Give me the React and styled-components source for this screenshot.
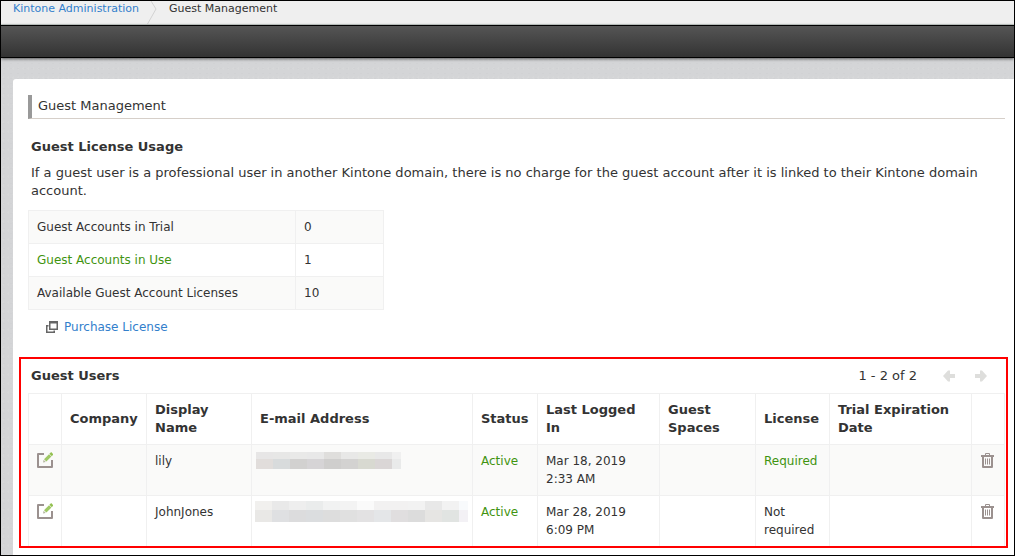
import styled, { createGlobalStyle } from 'styled-components'

const GlobalStyle = createGlobalStyle`
  * {
    box-sizing: border-box;
  }
  body {
    margin: 0;
    color: #333;
    background: #fff;
    font-family: 'DejaVu Sans', Verdana, sans-serif;
    font-size: 12px;
    line-height: 18px;
  }
`

const Page = styled.div`
  display: flex;
  flex-direction: column;
  min-height: 100vh;
  border: 1px solid #000;
  background-color: #d4d5d7;
  background-image: radial-gradient(#d1d2d4 1px, transparent 1px), radial-gradient(#d7d8d9 1px, transparent 1px);
  background-size: 7px 5px, 5px 9px;
`

const Breadcrumb = styled.nav`
  display: flex;
  height: 24px;
  padding-left: 12px;
  background: #efefef;
  border-bottom: 1px solid #c9d0cc;
  font-size: 11px;
  line-height: 16px;
`

const Separator = styled.svg`
  width: 10px;
  height: 23px;
  margin: 0 12px 0 8px;
`

const Toolbar = styled.div`
  height: 33px;
  border-top: 1px solid #000;
  border-bottom: 1px solid #000;
  background: linear-gradient(#555, #333);
  box-shadow: 0 1px 3px rgba(0, 0, 0, 0.6);
`

const Link = styled.a`
  color: #3380cc;
  text-decoration: none;
`

const Panel = styled.main`
  flex: 1;
  margin: 21px 0 0 12px;
  padding: 16px 6px 7px;
  background: #fff;
  border-top-left-radius: 3px;
`

const Content = styled.div`
  padding: 0 3px 0 9px;
`

const PageTitle = styled.h1`
  margin: 0;
  height: 24px;
  padding-left: 6px;
  border-left: 4px solid #999;
  border-bottom: 1px solid #d6cfc9;
  font-size: 13px;
  font-weight: 400;
  line-height: 21px;
`

const SectionTitle = styled.h2`
  margin: 0;
  padding-left: 3px;
  font-size: 13px;
  line-height: 34px;
`

const Usage = styled.section`
  padding-top: 11px;
`

const Description = styled.p`
  margin: 0 0 10px;
  padding: 0 3px;
  font-size: 13px;
  line-height: 18px;
`

const Table = styled.table`
  width: ${({ $width }) => $width || '100%'};
  table-layout: fixed;
  border-collapse: collapse;

  tr:nth-child(odd) > td {
    background: #fafaf9;
  }
`

const Col = styled.col`
  width: ${({ $width }) => $width};
`

const Cell = styled.td`
  padding: 7px 8px;
  border: 1px solid #f0f0f0;
  color: ${({ $active }) => ($active ? '#3f9410' : '#333')};
  vertical-align: top;
`

const HeadCell = styled.th`
  padding: 7px 8px;
  border: 1px solid #f0f0f0;
  font-size: 13px;
  text-align: left;
`

const MailCell = styled(Cell)`
  padding: 5px 3px;
`

const Purchase = styled.div`
  display: flex;
  align-items: center;
  gap: 6px;
  padding: 8px 0 0 18px;
`

const GuestUsers = styled.section`
  margin-top: 21px;
  padding: 0 1px 0 7px;
  border: 2px solid #f00;

  /* the frame closes the table, so the last row has no line of its own */
  tbody tr:last-child td {
    border-bottom: 0;
  }
`

const ListHeader = styled.div`
  display: flex;
  align-items: center;
  justify-content: space-between;
`

const Pager = styled.div`
  display: flex;
  align-items: center;
  padding-right: 18px;
  font-size: 13px;
`

const PagerButtons = styled.div`
  display: flex;
  gap: 20px;
  margin-left: 26px;
`

const IconButton = styled.button`
  display: block;
  padding: 0;
  border: 0;
  background: none;
  cursor: pointer;

  svg {
    display: block;
  }
`

const Mosaic = styled.svg`
  display: block;
`

const EditIcon = () => (
  <svg width="16" height="18" viewBox="0 0 16 18" fill="none">
    <path d="M7 2H1V15H15V8" stroke="#9b918f" strokeWidth="2" strokeLinejoin="round" />
    <path d="M7 7.2L12 2.2L14.4 4.6L9.4 9.6Z" fill="#9fc865" />
    <path d="M12.4 1.8L14.2 0L16.4 2.4L14.8 4.2Z" fill="#93c050" />
    <path d="M6 10.6L6.6 7.8L8.8 10Z" fill="#b5b8a2" />
  </svg>
)

const TrashIcon = () => (
  <svg width="14" height="18" viewBox="-1 0 14 18" fill="none" stroke="#9b918f">
    <path d="M4.5 3V1.5H8.5V3" />
    <path d="M0 4H13" strokeWidth="2" />
    <path d="M2 5V15H11V5" strokeWidth="2" strokeLinejoin="round" />
    <path d="M4.5 6.5V12.5M6.5 6.5V12.5M8.5 6.5V12.5" />
  </svg>
)

const ArrowIcon = ({ right }) => (
  <svg width="12" height="12" viewBox="0 0 12 12" fill="#dededc">
    {right ? (
      <path d="M12 6L7 0.5H5V4H0V8H5V11.5H7Z" />
    ) : (
      <path d="M0 6L5 0.5H7V4H12V8H7V11.5H5Z" />
    )}
  </svg>
)

const WindowIcon = () => (
  <svg width="12" height="12" viewBox="0 0 12 12" fill="#666">
    <path fillRule="evenodd" d="M3 0H12V9H3ZM4.5 2.5V7.5H10.5V2.5Z" />
    <path d="M0 4H2.5V5.5H1.5V10.5H7.5V9.5H9V12H0Z" />
  </svg>
)

const guests = [
  {
    name: 'lily',
    mail: {
      x: 1,
      y: 2,
      heights: [7, 10],
      colors: [
        ['#e7e6e6', '#e7e7e6', '#e9e9e8', '#e8e8e8', '#dfdedc', '#e8e8e7', '#e9eae5', '#e8e8e8', '#f0f0f0'],
        ['#e1dddb', '#d8dbdc', '#d2d1d0', '#d6d4d6', '#cfcecd', '#d3d2d1', '#d8d9d1', '#dad6d6', '#e9eaea']
      ]
    },
    seen: ['Mar 18, 2019', '2:33 AM'],
    license: 'Required',
    required: true
  },
  {
    name: 'JohnJones',
    mail: {
      x: 0,
      y: 0,
      heights: [9, 12],
      colors: [
        ['#f1f0ee', '#e9e9e9', '#eeeeee', '#eaecec', '#f1f2f2', '#f3f3f3', '#fafafa', '#f2f1f1', '#f2f1f1', '#f2f2f2', '#e8e8e8', '#f2f2f2', '#f8fafc'],
        ['#e9e8e6', '#dfe0e2', '#dcdcdd', '#dbdddf', '#dddddd', '#e0e0e0', '#e3e2e3', '#e4e6e8', '#e0dedf', '#dcdcdc', '#e6e5e3', '#e1e4e2', '#f3f1f5']
      ]
    },
    seen: ['Mar 28, 2019', '6:09 PM'],
    license: 'Not required',
    required: false
  }
]

const MaskedMail = ({ mail }) => (
  <Mosaic width="214" height="24" role="img" aria-label="Hidden address" shapeRendering="crispEdges">
    {mail.colors.map((row, i) =>
      row.map((color, j) => (
        <rect
          key={`${i}-${j}`}
          x={mail.x + j * 17}
          y={mail.y + (i === 0 ? 0 : mail.heights[0])}
          width={j === row.length - 1 ? 9 : 17}
          height={mail.heights[i]}
          fill={color}
        />
      ))
    )}
  </Mosaic>
)

const usage = [
  { label: 'Guest Accounts in Trial', value: 0 },
  { label: 'Guest Accounts in Use', value: 1, active: true },
  { label: 'Available Guest Account Licenses', value: 10 }
]

const columns = [
  { label: '', width: '33px' },
  { label: 'Company', width: '85px' },
  { label: 'Display Name', width: '105px' },
  { label: 'E-mail Address', width: 'auto' },
  { label: 'Status', width: '65px' },
  { label: 'Last Logged In', width: '122px' },
  { label: 'Guest Spaces', width: '96px' },
  { label: 'License', width: '74px' },
  { label: 'Trial Expiration Date', width: '142px' },
  { label: '', width: '33px' }
]

const App = () => {
  return (
    <>
      <GlobalStyle />
      <Page>
        <Breadcrumb aria-label="Breadcrumb">
          <Link href="#admin">Kintone Administration</Link>
          <Separator viewBox="0 0 10 23" fill="none" stroke="#d2d2d2" aria-hidden="true">
            <path d="M4 0L9 8L0.5 23" />
          </Separator>
          <span>Guest Management</span>
        </Breadcrumb>
        <Toolbar />

        <Panel>
          <Content>
            <PageTitle>Guest Management</PageTitle>

            <Usage>
              <SectionTitle>Guest License Usage</SectionTitle>
              <Description>
                If a guest user is a professional user in another Kintone domain, there is no charge for the guest
                account after it is linked to their Kintone domain account.
              </Description>
              <Table $width="356px">
                <colgroup>
                  <Col $width="267px" />
                  <Col $width="88px" />
                </colgroup>
                <tbody>
                  {usage.map(({ label, value, active }) => (
                    <tr key={label}>
                      <Cell $active={active}>{label}</Cell>
                      <Cell>{value}</Cell>
                    </tr>
                  ))}
                </tbody>
              </Table>
              <Purchase>
                <WindowIcon />
                <Link href="#purchase">Purchase License</Link>
              </Purchase>
            </Usage>
          </Content>

          <GuestUsers>
            <ListHeader>
              <SectionTitle>Guest Users</SectionTitle>
              <Pager>
                <span>1 - 2 of 2</span>
                <PagerButtons>
                  <IconButton aria-label="Previous">
                    <ArrowIcon />
                  </IconButton>
                  <IconButton aria-label="Next">
                    <ArrowIcon right />
                  </IconButton>
                </PagerButtons>
              </Pager>
            </ListHeader>
            <Table>
              <colgroup>
                {columns.map(({ width }, i) => (
                  <Col key={i} $width={width} />
                ))}
              </colgroup>
              <thead>
                <tr>
                  {columns.map(({ label }, i) => (
                    <HeadCell key={i}>{label}</HeadCell>
                  ))}
                </tr>
              </thead>
              <tbody>
                {guests.map(({ name, mail, seen, license, required }) => (
                  <tr key={name}>
                    <Cell>
                      <IconButton aria-label={`Edit ${name}`}>
                        <EditIcon />
                      </IconButton>
                    </Cell>
                    <Cell />
                    <Cell>{name}</Cell>
                    <MailCell>
                      <MaskedMail mail={mail} />
                    </MailCell>
                    <Cell $active>Active</Cell>
                    <Cell>
                      {seen[0]}
                      <br />
                      {seen[1]}
                    </Cell>
                    <Cell />
                    <Cell $active={required}>{license}</Cell>
                    <Cell />
                    <Cell>
                      <IconButton aria-label={`Delete ${name}`}>
                        <TrashIcon />
                      </IconButton>
                    </Cell>
                  </tr>
                ))}
              </tbody>
            </Table>
          </GuestUsers>
        </Panel>
      </Page>
    </>
  )
}
export default App
